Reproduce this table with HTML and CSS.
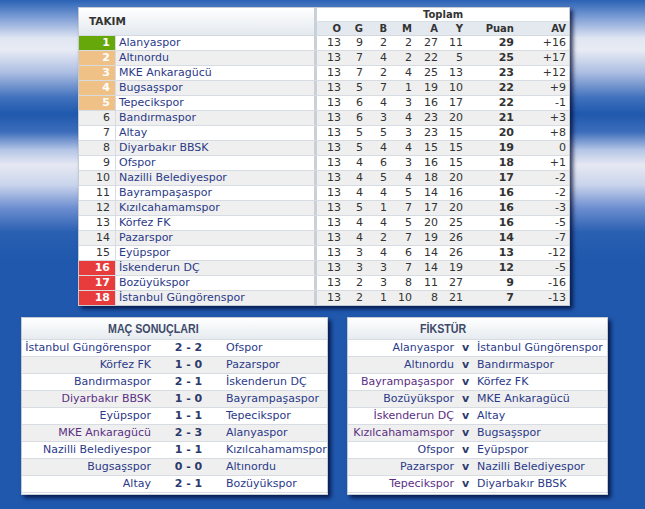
FILE: index.html
```html
<!DOCTYPE html>
<html lang="tr">
<head>
<meta charset="utf-8">
<title>Puan Durumu</title>
<link rel="stylesheet" href="styles.css">
</head>
<body>
<div class="standings">
  <div class="head">
    <div class="h-team">TAKIM</div>
    <div class="h-total">Toplam</div>
    <div class="h-col c-o">O</div>
    <div class="h-col">G</div>
    <div class="h-col">B</div>
    <div class="h-col">M</div>
    <div class="h-col">A</div>
    <div class="h-col">Y</div>
    <div class="h-col">Puan</div>
    <div class="h-col">AV</div>
  </div>
  <div class="row"><span class="rk up">1</span><span class="nm">Alanyaspor</span><span class="n c-o">13</span><span class="n">9</span><span class="n">2</span><span class="n">2</span><span class="n">27</span><span class="n">11</span><span class="n pt">29</span><span class="n">+16</span></div>
  <div class="row alt"><span class="rk po">2</span><span class="nm">Altınordu</span><span class="n c-o">13</span><span class="n">7</span><span class="n">4</span><span class="n">2</span><span class="n">22</span><span class="n">5</span><span class="n pt">25</span><span class="n">+17</span></div>
  <div class="row"><span class="rk po">3</span><span class="nm">MKE Ankaragücü</span><span class="n c-o">13</span><span class="n">7</span><span class="n">2</span><span class="n">4</span><span class="n">25</span><span class="n">13</span><span class="n pt">23</span><span class="n">+12</span></div>
  <div class="row alt"><span class="rk po">4</span><span class="nm">Bugsaşspor</span><span class="n c-o">13</span><span class="n">5</span><span class="n">7</span><span class="n">1</span><span class="n">19</span><span class="n">10</span><span class="n pt">22</span><span class="n">+9</span></div>
  <div class="row"><span class="rk po">5</span><span class="nm">Tepecikspor</span><span class="n c-o">13</span><span class="n">6</span><span class="n">4</span><span class="n">3</span><span class="n">16</span><span class="n">17</span><span class="n pt">22</span><span class="n">-1</span></div>
  <div class="row alt"><span class="rk">6</span><span class="nm">Bandırmaspor</span><span class="n c-o">13</span><span class="n">6</span><span class="n">3</span><span class="n">4</span><span class="n">23</span><span class="n">20</span><span class="n pt">21</span><span class="n">+3</span></div>
  <div class="row"><span class="rk">7</span><span class="nm">Altay</span><span class="n c-o">13</span><span class="n">5</span><span class="n">5</span><span class="n">3</span><span class="n">23</span><span class="n">15</span><span class="n pt">20</span><span class="n">+8</span></div>
  <div class="row alt"><span class="rk">8</span><span class="nm">Diyarbakır BBSK</span><span class="n c-o">13</span><span class="n">5</span><span class="n">4</span><span class="n">4</span><span class="n">15</span><span class="n">15</span><span class="n pt">19</span><span class="n">0</span></div>
  <div class="row"><span class="rk">9</span><span class="nm">Ofspor</span><span class="n c-o">13</span><span class="n">4</span><span class="n">6</span><span class="n">3</span><span class="n">16</span><span class="n">15</span><span class="n pt">18</span><span class="n">+1</span></div>
  <div class="row alt"><span class="rk">10</span><span class="nm">Nazilli Belediyespor</span><span class="n c-o">13</span><span class="n">4</span><span class="n">5</span><span class="n">4</span><span class="n">18</span><span class="n">20</span><span class="n pt">17</span><span class="n">-2</span></div>
  <div class="row"><span class="rk">11</span><span class="nm">Bayrampaşaspor</span><span class="n c-o">13</span><span class="n">4</span><span class="n">4</span><span class="n">5</span><span class="n">14</span><span class="n">16</span><span class="n pt">16</span><span class="n">-2</span></div>
  <div class="row alt"><span class="rk">12</span><span class="nm">Kızılcahamamspor</span><span class="n c-o">13</span><span class="n">5</span><span class="n">1</span><span class="n">7</span><span class="n">17</span><span class="n">20</span><span class="n pt">16</span><span class="n">-3</span></div>
  <div class="row"><span class="rk">13</span><span class="nm">Körfez FK</span><span class="n c-o">13</span><span class="n">4</span><span class="n">4</span><span class="n">5</span><span class="n">20</span><span class="n">25</span><span class="n pt">16</span><span class="n">-5</span></div>
  <div class="row alt"><span class="rk">14</span><span class="nm">Pazarspor</span><span class="n c-o">13</span><span class="n">4</span><span class="n">2</span><span class="n">7</span><span class="n">19</span><span class="n">26</span><span class="n pt">14</span><span class="n">-7</span></div>
  <div class="row"><span class="rk">15</span><span class="nm">Eyüpspor</span><span class="n c-o">13</span><span class="n">3</span><span class="n">4</span><span class="n">6</span><span class="n">14</span><span class="n">26</span><span class="n pt">13</span><span class="n">-12</span></div>
  <div class="row alt"><span class="rk dn">16</span><span class="nm">İskenderun DÇ</span><span class="n c-o">13</span><span class="n">3</span><span class="n">3</span><span class="n">7</span><span class="n">14</span><span class="n">19</span><span class="n pt">12</span><span class="n">-5</span></div>
  <div class="row"><span class="rk dn">17</span><span class="nm">Bozüyükspor</span><span class="n c-o">13</span><span class="n">2</span><span class="n">3</span><span class="n">8</span><span class="n">11</span><span class="n">27</span><span class="n pt">9</span><span class="n">-16</span></div>
  <div class="row alt last"><span class="rk dn">18</span><span class="nm">İstanbul Güngörenspor</span><span class="n c-o">13</span><span class="n">2</span><span class="n">1</span><span class="n">10</span><span class="n">8</span><span class="n">21</span><span class="n pt">7</span><span class="n">-13</span></div>
</div>

<div class="panels">
  <div class="box results">
    <div class="box-head"><span class="head-text">MAÇ SONUÇLARI</span></div>
    <div class="m"><span class="home">İstanbul Güngörenspor</span><span class="sc">2 - 2</span><span class="away">Ofspor</span></div>
    <div class="m alt"><span class="home">Körfez FK</span><span class="sc">1 - 0</span><span class="away">Pazarspor</span></div>
    <div class="m"><span class="home">Bandırmaspor</span><span class="sc">2 - 1</span><span class="away">İskenderun DÇ</span></div>
    <div class="m alt"><span class="home vis">Diyarbakır BBSK</span><span class="sc">1 - 0</span><span class="away">Bayrampaşaspor</span></div>
    <div class="m"><span class="home">Eyüpspor</span><span class="sc">1 - 1</span><span class="away">Tepecikspor</span></div>
    <div class="m alt"><span class="home vis">MKE Ankaragücü</span><span class="sc">2 - 3</span><span class="away">Alanyaspor</span></div>
    <div class="m"><span class="home">Nazilli Belediyespor</span><span class="sc">1 - 1</span><span class="away">Kızılcahamamspor</span></div>
    <div class="m alt"><span class="home">Bugsaşspor</span><span class="sc">0 - 0</span><span class="away">Altınordu</span></div>
    <div class="m"><span class="home">Altay</span><span class="sc">2 - 1</span><span class="away">Bozüyükspor</span></div>
  </div>
  <div class="box fixtures">
    <div class="box-head"><span class="head-text">FİKSTÜR</span></div>
    <div class="f"><span class="home">Alanyaspor</span><span class="vs">v</span><span class="away">İstanbul Güngörenspor</span></div>
    <div class="f alt"><span class="home">Altınordu</span><span class="vs">v</span><span class="away">Bandırmaspor</span></div>
    <div class="f"><span class="home vis">Bayrampaşaspor</span><span class="vs">v</span><span class="away">Körfez FK</span></div>
    <div class="f alt"><span class="home">Bozüyükspor</span><span class="vs">v</span><span class="away">MKE Ankaragücü</span></div>
    <div class="f"><span class="home vis">İskenderun DÇ</span><span class="vs">v</span><span class="away">Altay</span></div>
    <div class="f alt"><span class="home vis">Kızılcahamamspor</span><span class="vs">v</span><span class="away">Bugsaşspor</span></div>
    <div class="f"><span class="home">Ofspor</span><span class="vs">v</span><span class="away">Eyüpspor</span></div>
    <div class="f alt"><span class="home">Pazarspor</span><span class="vs">v</span><span class="away">Nazilli Belediyespor</span></div>
    <div class="f"><span class="home vis">Tepecikspor</span><span class="vs">v</span><span class="away">Diyarbakır BBSK</span></div>
  </div>
</div>
</body>
</html>
```
FILE: styles.css
```css
* { box-sizing: border-box; }

html, body {
  margin: 0;
  padding: 0;
}

body {
  width: 645px;
  height: 509px;
  overflow: hidden;
  font-family: "DejaVu Sans", Verdana, sans-serif;
  font-size: 11px;
  color: #333;
  background: linear-gradient(to bottom,
    #2a62b5 0px,
    #7f9fd6 18px,
    #dfe5f2 38px,
    #e8ebf4 50px,
    #aebfe3 72px,
    #3f70bd 98px,
    #1f58ad 114px,
    #3d6dbb 132px,
    #b5c5e6 150px,
    #e6e9f3 165px,
    #c9d4ec 185px,
    #6d8ed0 208px,
    #2a60b2 232px,
    #1f58ad 260px,
    #1f58ad 509px);
}

/* ---------- standings ---------- */
.standings {
  margin: 7px 0 0 78px;
  width: 492px;
  background: #fff;
  border: 1px solid #c4cbd3;
  box-shadow: 3px 3px 4px rgba(0, 10, 50, 0.75);
}

.head,
.row {
  display: grid;
  grid-template-columns: 36px 199px 30px 22px 24px 25px 26px 25px 51px 52px;
}

.head {
  grid-template-rows: 14px 14px;
  font-size: 10px;
  font-weight: bold;
  color: #333;
}

.h-team {
  grid-row: 1 / 3;
  grid-column: 1 / 3;
  padding-left: 10px;
  font-size: 10.5px;
  line-height: 27px;
  background: linear-gradient(to bottom, #ffffff, #e3e9ef);
  border-bottom: 1px solid #d3d9df;
}

.h-total {
  grid-row: 1;
  grid-column: 3 / 11;
  text-align: center;
  line-height: 13px;
  border-left: 3px solid #c9d0d7;
  border-bottom: 1px solid #d9dfe5;
  background: #fff;
}

.h-col {
  grid-row: 2;
  text-align: right;
  padding-right: 3px;
  line-height: 14px;
  background: #e3e9ef;
  border-bottom: 1px solid #d3d9df;
}

.row {
  height: 15px;
  line-height: 14px;
  border-bottom: 1px solid #d6dce2;
  background: #fff;
}

.row.alt { background: #efefef; }
.row.last { border-bottom: 0; height: 14px; }

.rk {
  text-align: right;
  padding-right: 5px;
  color: #333;
}

.rk.up { background: #66a80a; color: #fff; font-weight: bold; }
.rk.po { background: #f0c187; color: #fff; font-weight: bold; }
.rk.dn { background: #e83c3c; color: #fff; font-weight: bold; }

.nm {
  border-left: 1px solid #d6dce2;
  padding-left: 3px;
  color: #2b3a88;
  white-space: nowrap;
}

.n {
  text-align: right;
  padding-right: 3px;
}

.c-o { border-left: 3px solid #c9d0d7; }

.n.pt { font-weight: bold; }

/* ---------- panels ---------- */
.panels {
  display: flex;
  align-items: flex-start;
  gap: 19px;
  margin: 11px 0 0 21px;
}

.box {
  background: #fff;
  border: 1px solid #c3cad2;
  box-shadow: 3px 3px 4px rgba(0, 10, 50, 0.75);
  padding-bottom: 1px;
}

.results { width: 307px; }
.fixtures { width: 261px; }

.box-head {
  height: 22px;
  line-height: 21px;
  font-family: "Liberation Sans", Arial, sans-serif;
  font-weight: bold;
  font-size: 13px;
  color: #3d4a68;
  background: linear-gradient(to bottom, #ffffff, #e6ebf0);
  border-bottom: 1px solid #d6dce2;
  white-space: nowrap;
}

.head-text {
  display: inline-block;
  transform: scaleX(0.82);
  transform-origin: left center;
}

.results .box-head { padding-left: 86px; }
.fixtures .box-head { padding-left: 72px; }

.m,
.f {
  display: grid;
  height: 17px;
  line-height: 16px;
  border-bottom: 1px solid #d6dce2;
  background: #fff;
  white-space: nowrap;
}

.m { grid-template-columns: 133px 67px 105px; }
.f { grid-template-columns: 110px 15px 134px; }

.m.alt,
.f.alt { background: #efefef; }

.home {
  text-align: right;
  padding-right: 4px;
  color: #2b3a88;
}

.away {
  padding-left: 4px;
  color: #2b3a88;
}

.vis { color: #5b2f84; }

.sc,
.vs {
  text-align: center;
  font-weight: bold;
  color: #2b3a6a;
}
```
